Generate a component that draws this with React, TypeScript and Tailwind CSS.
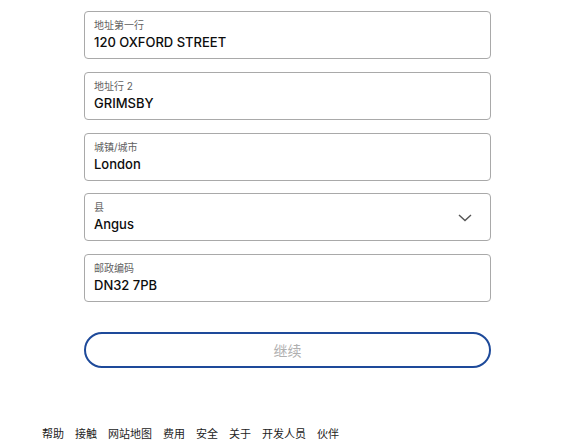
import React from "react";

const fields = [
  { label: "地址第一行", value: "120 OXFORD STREET" },
  { label: "地址行 2", value: "GRIMSBY" },
  { label: "城镇/城市", value: "London" },
  { label: "县", value: "Angus", select: true },
  { label: "邮政编码", value: "DN32 7PB" },
];

const footer = ["帮助", "接触", "网站地图", "费用", "安全", "关于", "开发人员", "伙伴"];

export default function App() {
  return (
    <div
      className="w-[575px] h-[442px] bg-white overflow-hidden"
      style={{ fontFamily: 'Inter, "Noto Sans CJK SC", sans-serif' }}
    >
      <div className="pl-[84px] pt-[11px] w-[491px]">
        <div className="flex flex-col gap-[12.75px]">
          {fields.map((f) => (
            <div
              key={f.label}
              className="relative h-[48px] rounded-[4px] border border-[#a9a9a9] pl-[9px] flex flex-col justify-center"
            >
              <div className="text-[10px] leading-[12px] text-[#5f5f5f]">{f.label}</div>
              <div className="text-[13px] leading-[18px] font-medium text-[#0d0d0d] mt-[2px]">{f.value}</div>
              {f.select && (
                <svg
                  className="absolute right-[18px] top-[20px]"
                  width="14"
                  height="8"
                  viewBox="0 0 14 8"
                  fill="none"
                >
                  <path d="M1 1l6 5.5L13 1" stroke="#555" strokeWidth="1.4" />
                </svg>
              )}
            </div>
          ))}
        </div>
        <button className="mt-[30px] w-full h-[36px] rounded-full border-2 border-[#1e4a9a] bg-white text-[14px] text-[#b0b0b0]">
          继续
        </button>
      </div>
      <div className="pl-[42px] mt-[59px] flex gap-[11px] text-[11px] leading-[14px] text-[#222]">
        {footer.map((t) => (
          <span key={t}>{t}</span>
        ))}
      </div>
    </div>
  );
}
